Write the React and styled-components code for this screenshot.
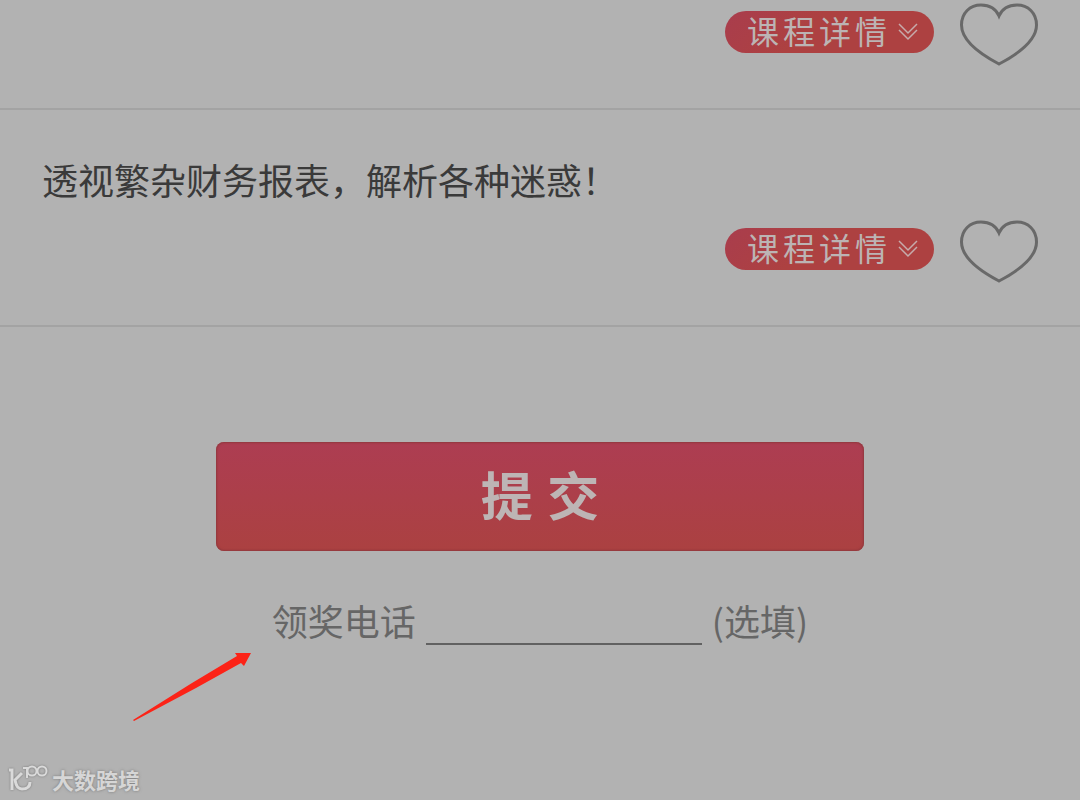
import React, { useState } from "react";
import styled, { createGlobalStyle } from "styled-components";

const GlobalStyle = createGlobalStyle`
  * {
    box-sizing: border-box;
  }
  body {
    margin: 0;
    background: #b2b2b2;
    font-family: "Noto Sans CJK SC", "Noto Sans", sans-serif;
  }
`;

const Page = styled.main`
  position: relative;
  min-height: 100vh;
  overflow: hidden;
`;

const CourseList = styled.ul`
  margin: 0;
  padding: 0;
  list-style: none;
`;

const CourseItem = styled.li`
  padding: 0 42px 42px;
  border-bottom: 2px solid #a3a3a3;
`;

const CourseTitle = styled.h2`
  margin: 0;
  padding: 42px 0 11px;
  color: #3a3a3a;
  font-size: 36px;
  font-weight: 400;
  line-height: 54px;
`;

const Actions = styled.div`
  display: flex;
  align-items: flex-start;
  justify-content: flex-end;
  gap: 26px;
`;

const DetailButton = styled.button`
  display: flex;
  align-items: center;
  gap: 7px;
  height: 42px;
  margin-top: 11px;
  padding: 0 16px 0 22px;
  border: 0;
  border-radius: 21px;
  background: linear-gradient(135deg, #a93d4d, #ad4141 40%);
  color: #bcb4b4;
  font-family: inherit;
  font-size: 32px;
  line-height: 38px;
  letter-spacing: 4px;
  cursor: pointer;
`;

const DetailText = styled.span`
  padding-bottom: 4px;
`;

const LikeButton = styled.button`
  display: flex;
  padding: 0;
  border: 0;
  background: none;
  cursor: pointer;
`;

const Form = styled.form`
  display: flex;
  flex-direction: column;
  align-items: center;
  gap: 42px;
  padding: 115px 0 60px;
`;

const SubmitButton = styled.button`
  width: 60%;
  height: 109px;
  padding: 3px 0 0;
  border: 0;
  border-radius: 8px;
  background: linear-gradient(#ad3d52, #ab4141);
  box-shadow: inset 0 0 2px 1px #90383d;
  color: #bdb5b5;
  font-family: "Liberation Sans", "Noto Sans CJK SC", sans-serif;
  font-size: 52px;
  font-weight: 700;
  line-height: 60px;
  cursor: pointer;
`;

const Field = styled.label`
  display: flex;
  align-items: center;
  gap: 10px;
  color: #666;
  font-size: 36px;
  line-height: 54px;
`;

const PhoneInput = styled.input`
  width: 276px;
  height: 50px;
  padding: 0;
  border: 0;
  border-bottom: 2px solid #616161;
  outline: none;
  background: none;
  color: inherit;
  font: inherit;
`;

const Arrow = styled.svg`
  position: absolute;
  top: 650px;
  left: 130px;
`;

const Watermark = styled.div`
  position: absolute;
  bottom: 6px;
  left: 8px;
  display: flex;
  align-items: center;
  gap: 4px;
  color: #d6d6d6;
  font-size: 22px;
  font-weight: 700;
  line-height: 30px;
  text-shadow: 0 0 3px #777;
`;

const Logo = styled.svg`
  filter: drop-shadow(0 0 1px #777);
`;

const courses = [
  { id: 1, title: "" },
  { id: 2, title: "透视繁杂财务报表，解析各种迷惑！" },
];

const ChevronsDown = () => (
  <svg width="20" height="18" viewBox="0 0 20 18" fill="none" stroke="#c6abab" strokeWidth="1.5">
    <path d="M1 1l9 9 9-9M1 7l9 9 9-9" />
  </svg>
);

const Heart = ({ filled }) => (
  <svg width="78" height="66" viewBox="0 0 78 66" fill={filled ? "#ad4141" : "none"} stroke="#696969" strokeWidth="3">
    <path d="M39 16C36 9 30 5 21 5C10 5 1.500 13 1.500 25C1.500 41 20 54 39 64C58 54 76.500 41 76.500 25C76.500 13 68 5 57 5C48 5 42 9 39 16Z" />
  </svg>
);

const Course = ({ title }) => {
  const [liked, setLiked] = useState(false);

  return (
    <CourseItem>
      {title && <CourseTitle>{title}</CourseTitle>}
      <Actions>
        <DetailButton type="button">
          <DetailText>课程详情</DetailText>
          <ChevronsDown />
        </DetailButton>
        <LikeButton
          type="button"
          aria-label="收藏"
          aria-pressed={liked}
          onClick={() => setLiked(!liked)}
        >
          <Heart filled={liked} />
        </LikeButton>
      </Actions>
    </CourseItem>
  );
};

const App = () => {
  const [phone, setPhone] = useState("");

  return (
    <Page>
      <GlobalStyle />
      <CourseList>
        {courses.map((course) => (
          <Course key={course.id} title={course.title} />
        ))}
      </CourseList>
      <Form onSubmit={(e) => e.preventDefault()}>
        <SubmitButton type="submit">提 交</SubmitButton>
        <Field>
          领奖电话
          <PhoneInput
            type="tel"
            value={phone}
            onChange={(e) => setPhone(e.target.value)}
          />
          <span>(选填)</span>
        </Field>
      </Form>
      <Arrow width="124" height="74" viewBox="0 0 124 74" fill="#fc2317" aria-hidden="true">
        <path d="M3 70L62 33L107 6L105 3L121 3L114 16L111 13L66 38L4 71Z" />
      </Arrow>
      <Watermark>
        <Logo width="40" height="28" viewBox="0 0 40 28" fill="none" stroke="#dadada">
          <path d="M1 5h3v20" strokeWidth="3" />
          <path d="M14 8L7 15C8 21 10 24 14 24C19 24 22 22 22 17" strokeWidth="3" />
          <path d="M15 3h4v10" strokeWidth="2" />
          <circle cx="24" cy="6" r="4.5" strokeWidth="2" />
          <circle cx="34" cy="6" r="4.5" strokeWidth="2" />
        </Logo>
        大数跨境
      </Watermark>
    </Page>
  );
};

export default App;
